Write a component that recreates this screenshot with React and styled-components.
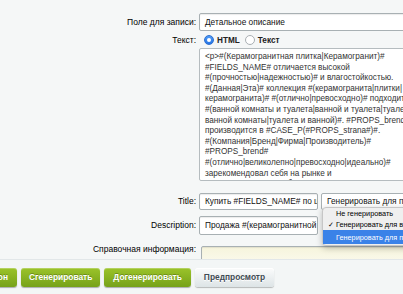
import React from 'react';
import styled, { createGlobalStyle } from 'styled-components';

const GlobalStyle = createGlobalStyle`
    html, body {
        margin: 0;
        padding: 0;
        background: #f5f7f7;
        overflow: hidden;
    }
    body {
        font-family: "Liberation Sans", Arial, sans-serif;
        color: #000;
    }
`;

const Page = styled.div`
    width: 403px;
    height: 294px;
    overflow: hidden;
    display: flex;
    flex-direction: column;
`;

const Form = styled.div`
    display: grid;
    grid-template-columns: 196px 260px;
    align-content: start;
    column-gap: 3px;
    padding-top: 13px;
    height: 259px;
    box-sizing: border-box;
    overflow: hidden;
    flex-shrink: 0;
`;

const Label = styled.div`
    text-align: right;
    font-size: 8.5px;
    line-height: ${(p) => p.$h || 18}px;
    margin-top: ${(p) => p.$mt || 0}px;
    white-space: nowrap;
`;

const Field = styled.div`
    margin-top: ${(p) => p.$mt || 0}px;
    display: flex;
    align-items: flex-start;
    gap: 3px;
    min-width: 0;
`;

const Input = styled.div`
    box-sizing: border-box;
    height: ${(p) => p.$h || 18}px;
    width: ${(p) => (p.$w ? `${p.$w}px` : '100%')};
    flex-shrink: 0;
    border: 1px solid #a8b0b3;
    border-radius: 2px;
    background: ${(p) => (p.$yellow ? 'linear-gradient(#f6f4dc, #fbfaee)' : '#fff')};
    box-shadow: inset 0 1px 1px rgba(0, 0, 0, 0.08);
    font-size: 8.3px;
    line-height: ${(p) => (p.$h || 18) - 2}px;
    padding: 0 5px;
    margin-left: ${(p) => p.$ml || 0}px;
    white-space: nowrap;
    overflow: hidden;
    color: #111;
`;

const RadioRow = styled.div`
    margin-top: 3px;
    height: 12px;
    display: flex;
    align-items: center;
    gap: 3px;
    padding-left: 5px;
`;

const Radio = styled.span`
    box-sizing: border-box;
    width: 10px;
    height: 10px;
    border-radius: 50%;
    display: inline-flex;
    align-items: center;
    justify-content: center;
    background: ${(p) => (p.$checked ? 'linear-gradient(#4f9bf5, #2574e6)' : '#fff')};
    border: 1px solid ${(p) => (p.$checked ? '#2d6fcf' : '#a9afb3')};
    &::after {
        content: '';
        width: 4px;
        height: 4px;
        border-radius: 50%;
        background: #fff;
        display: ${(p) => (p.$checked ? 'block' : 'none')};
    }
`;

const RadioText = styled.span`
    font-size: 8.2px;
    font-weight: bold;
    color: #222;
    margin-right: 2px;
`;

const TextArea = styled.div`
    box-sizing: border-box;
    margin-top: 2px;
    height: 133px;
    width: 100%;
    border: 1px solid #b5bcbf;
    border-radius: 2px;
    background: #fff;
    padding: 3px 5px;
    font-size: 8.2px;
    line-height: 10.6px;
    color: #333;
    white-space: pre;
    overflow: hidden;
`;

const SelectWrap = styled.div`
    position: relative;
`;

const Select = styled.div`
    box-sizing: border-box;
    height: 17px;
    width: 140px;
    border: 1px solid #a8b0b3;
    border-radius: 2px;
    background: #fff;
    font-size: 8.3px;
    line-height: 15px;
    padding: 0 5px;
    white-space: nowrap;
    color: #111;
`;

const Menu = styled.div`
    position: absolute;
    top: 14px;
    left: 1px;
    width: 120px;
    padding: 0 0 1px;
    background: #efefef;
    border: 1px solid #c6c6c6;
    border-radius: 4px 0 0 4px;
    box-shadow: 0 2px 6px rgba(0, 0, 0, 0.25);
    z-index: 2;
`;

const MenuItem = styled.div`
    height: 11px;
    line-height: 11px;
    padding-left: 13px;
    position: relative;
    font-size: 7.3px;
    white-space: nowrap;
    color: ${(p) => (p.$active ? '#fff' : '#000')};
    background: ${(p) => (p.$active ? '#3a82e8' : 'transparent')};
    padding-top: ${(p) => (p.$active ? 2 : 0)}px;
    padding-bottom: ${(p) => (p.$active ? 1 : 0)}px;
`;

const Check = styled.span`
    position: absolute;
    left: 5px;
    top: 0;
`;

const ButtonBar = styled.div`
    height: 35px;
    box-sizing: border-box;
    border-top: 1px solid #e2e7e9;
    background: #f3f6f6;
    display: flex;
    align-items: flex-start;
    gap: 4px;
    padding-top: 8px;
`;

const Lead = styled.div`
    width: 17px;
    flex-shrink: 0;
    display: flex;
    justify-content: flex-end;
`;

const Button = styled.div`
    box-sizing: border-box;
    height: 19px;
    flex-shrink: 0;
    padding: 0 ${(p) => p.$px || 9}px;
    border-radius: 3px;
    font-size: 8.4px;
    font-weight: bold;
    line-height: 19px;
    white-space: nowrap;
    color: ${(p) => (p.$green ? '#fff' : '#3f4b54')};
    text-shadow: ${(p) => (p.$green ? '0 -1px 0 rgba(0,0,0,0.25)' : '0 1px #fff')};
    background: ${(p) =>
        p.$green
            ? 'linear-gradient(#9bc32a, #76a219)'
            : 'linear-gradient(#fbfcfc, #dde4e6)'};
    box-shadow: ${(p) =>
        p.$green
            ? '0 1px 1px rgba(0,0,0,0.3), inset 0 1px 0 rgba(255,255,255,0.25)'
            : '0 1px 1px rgba(0,0,0,0.25), inset 0 1px 0 #fff'};
`;

const textLines = [
    '<p>#(Керамогранитная плитка|Керамогранит)#',
    '#FIELDS_NAME# отличается высокой',
    '#(прочностью|надежностью)# и влагостойкостью.',
    '#(Данная|Эта)# коллекция #(керамогранита|плитки|',
    'керамогранита)# #(отлично|превосходно)# подходит',
    '#(ванной комнаты и туалета|ванной и туалета|туалета и',
    'ванной комнаты|туалета и ванной)#. #PROPS_brend#',
    'производится в #CASE_P(#PROPS_strana#)#.',
    '#(Компания|Бренд|Фирма|Производитель)#',
    '#PROPS_brend#',
    '#(отлично|великолепно|превосходно|идеально)#',
    'зарекомендовал себя на рынке и',
    'отечественного потребителя.',
];

const App = () => {
    return (
        <Page>
            <GlobalStyle />
            <Form>
                <Label>Поле для записи:</Label>
                <Field>
                    <Input>Детальное описание</Input>
                </Field>

                <Label $h={12} $mt={3}>Текст:</Label>
                <RadioRow>
                    <Radio $checked />
                    <RadioText>HTML</RadioText>
                    <Radio />
                    <RadioText>Текст</RadioText>
                </RadioRow>

                <div />
                <TextArea>{textLines.join('\n')}</TextArea>

                <Label $h={17} $mt={12}>Title:</Label>
                <Field $mt={12}>
                    <Input $w={119} $h={17}>Купить #FIELDS_NAME# по цене</Input>
                    <SelectWrap>
                        <Select>Генерировать для пустых</Select>
                        <Menu>
                            <MenuItem>Не генерировать</MenuItem>
                            <MenuItem>
                                <Check>✓</Check>Генерировать для всех
                            </MenuItem>
                            <MenuItem $active>Генерировать для пустых</MenuItem>
                        </Menu>
                    </SelectWrap>
                </Field>

                <Label $h={19} $mt={6}>Description:</Label>
                <Field $mt={6}>
                    <Input $w={119} $h={19}>Продажа #(керамогранитной плитки</Input>
                </Field>

                <Label $h={8} $mt={10}>Справочная информация:</Label>
                <Field $mt={11}>
                    <Input $h={20} $ml={2} $yellow />
                </Field>
            </Form>
            <ButtonBar>
                <Lead>
                    <Button $green>Сохранить шаблон</Button>
                </Lead>
                <Button $green $px={8}>Сгенерировать</Button>
                <Button $green $px={9}>Догенерировать</Button>
                <Button $px={9}>Предпросмотр</Button>
            </ButtonBar>
        </Page>
    );
};

export default App;
